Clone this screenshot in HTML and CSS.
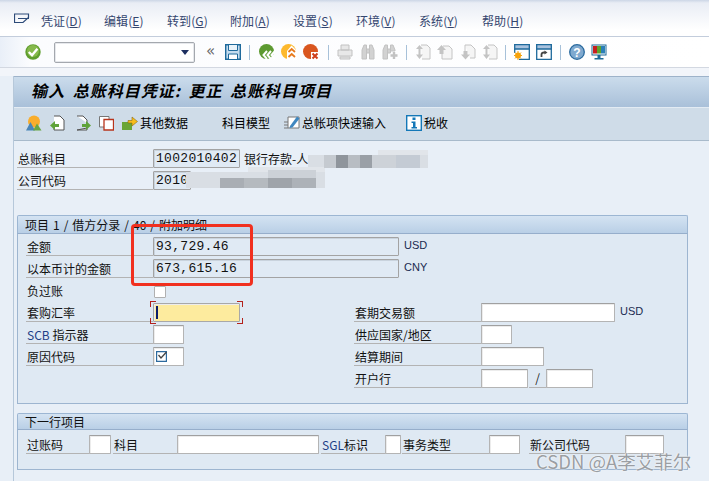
FILE: index.html
```html
<!DOCTYPE html>
<html lang="zh">
<head>
<meta charset="utf-8">
<title>输入 总账科目凭证</title>
<link rel="stylesheet" href="styles.css">
</head>
<body>
<div class="page">
  <header class="menubar">
    <svg class="menuicon" width="16" height="12" viewBox="0 0 16 12"><path d="M.5 1H14.500V4.500L9 9.500H.5Z M4 5.500H15" fill="none" stroke="#2c4a78" stroke-width="1.200"/></svg>
    <nav class="menus">
      <span class="menu">凭证(<u>D</u>)</span>
      <span class="menu">编辑(<u>E</u>)</span>
      <span class="menu">转到(<u>G</u>)</span>
      <span class="menu">附加(<u>A</u>)</span>
      <span class="menu">设置(<u>S</u>)</span>
      <span class="menu">环境(<u>V</u>)</span>
      <span class="menu">系统(<u>Y</u>)</span>
      <span class="menu">帮助(<u>H</u>)</span>
    </nav>
  </header>

  <div class="toolbar">
    <svg class="ic ok" viewBox="0 0 16 16"><circle cx="8" cy="8" r="7.700" fill="#5f9e2e"/><circle cx="8" cy="7" r="6" fill="#86b94c"/><path d="M3.800 8 7 11.200 12.400 4.800" fill="none" stroke="#fff" stroke-width="2.400"/></svg>
    <div class="cmd"><span class="caret"></span></div>
    <span class="chev">«</span>
    <svg class="ic" viewBox="0 0 16 16"><path d="M.7.7H15.300V15.300H.7Z" fill="#c5dcee" stroke="#1f6a9c" stroke-width="1.400"/><path d="M3.500 1V6.500H12.500V1" fill="#e9f3fa" stroke="#1f6a9c"/><path d="M3.500 15V10H12.500V15" fill="#fff" stroke="#1f6a9c"/></svg>
    <i class="sep s1"></i>
    <svg class="ic" viewBox="0 0 16 16"><circle cx="7.500" cy="7.500" r="7.500" fill="#5d9a31"/><path d="M8 7 4.500 11 8 15M12 7 8.500 11 12 15M16 7 12.500 11 16 15" fill="none" stroke="#fff" stroke-width="2"/></svg>
    <svg class="ic g6" viewBox="0 0 16 16"><circle cx="7.500" cy="7.500" r="7.500" fill="#fdb92e"/><path d="M10.500 1.500 16 7V16H6V7Z" fill="#fff"/><path d="M7.500 8 10.700 5 14 8M7.500 13 10.700 10 14 13" fill="none" stroke="#e87a1c" stroke-width="1.800"/></svg>
    <svg class="ic g6" viewBox="0 0 16 16"><circle cx="7.500" cy="7.500" r="7.500" fill="#d9561f"/><rect x="8" y="8" width="8" height="8" fill="#fff"/><path d="M9.500 9.500 14.500 14.500M14.500 9.500 9.500 14.500" stroke="#cf3e1a" stroke-width="2"/></svg>
    <i class="sep s2"></i>
    <svg class="ic" viewBox="0 0 16 16"><path d="M4 1H12V6H4ZM1 6H15V12H1ZM3 13H13V15H3Z" fill="#e8e8e8" stroke="#c2c2c2"/></svg>
    <svg class="ic g7 dim" viewBox="0 0 16 16"><path d="M2 15V6L4 1H6.500V15ZM9.500 15V1H12L14 6V15ZM6.500 5H9.500V9H6.500Z" fill="#d2d2d2" stroke="#c2c2c2"/></svg>
    <svg class="ic g6 dim" viewBox="0 0 16 16"><path d="M1 15V6L3 1H5.500V15ZM8.500 9V1H11L13 6V7H8.500ZM5.500 5H8.500V9H5.500Z" fill="#d2d2d2" stroke="#c2c2c2"/><path d="M12 8V15M8.500 11.500H15.500" stroke="#c2c2c2" stroke-width="2.400"/></svg>
    <i class="sep s3"></i>
    <svg class="ic" viewBox="0 0 16 16"><path d="M6 1H12L15 4V15H7" fill="#f5f5f5" stroke="#c4c4c4"/><path d="M4.500 1 8 5H1ZM4.500 15 1 10.500H8Z M3.500 4H5.500V12H3.500Z" fill="#c4c4c4"/></svg>
    <svg class="ic g6" viewBox="0 0 16 16"><path d="M6 2H12L15 5V15H5V9" fill="#f5f5f5" stroke="#c4c4c4"/><path d="M4.500 1 9 6H6.500V10H2.500V6H0Z" fill="#c4c4c4"/></svg>
    <svg class="ic g8 nar" viewBox="0 0 15 16"><path d="M4 1H10L14 5V14H9M4 1V7" fill="#f5f5f5" stroke="#c4c4c4"/><path d="M4.500 15.500 0 10.500H2.500V7H6.500V10.500H9Z" fill="#c4c4c4"/></svg>
    <svg class="ic g6" viewBox="0 0 16 16"><path d="M6 1H12L15 4V15H7" fill="#f5f5f5" stroke="#c4c4c4"/><path d="M4.500 1 8 5H1ZM4.500 15 1 10.500H8Z M3.500 4H5.500V12H3.500Z" fill="#c4c4c4"/></svg>
    <i class="sep s5"></i>
    <svg class="ic" viewBox="0 0 16 16"><path d="M.7.7H15.300V15.300H5" fill="#fff" stroke="#1f6a9c" stroke-width="1.300"/><path d="M.7.7H15.300V5H.7Z" fill="#a9c2de" stroke="#1f6a9c" stroke-width="1.300"/><path d="M.7 5V9" stroke="#1f6a9c" stroke-width="1.300"/><circle cx="4" cy="11.500" r="3" fill="#f7a30a"/><path d="M4 7V16M0 11.500H8M1 8.500 7 14.500M7 8.500 1 14.500" stroke="#f7a30a"/></svg>
    <svg class="ic g6" viewBox="0 0 16 16"><path d="M.7.7H15.300V15.300H.7Z" fill="#fff" stroke="#1f6a9c" stroke-width="1.300"/><path d="M.7.7H15.300V5H.7Z" fill="#a9c2de" stroke="#1f6a9c" stroke-width="1.300"/><path d="M5.500 13V10.500Q5.500 8.500 8 8.500H9" fill="none" stroke="#444" stroke-width="1.800"/><path d="M8.500 6.500 11.500 8.500 8.500 10.500Z" fill="#444"/></svg>
    <i class="sep s4"></i>
    <svg class="ic" viewBox="0 0 16 16"><circle cx="8" cy="8" r="7.300" fill="#7fa9cf" stroke="#2a6a9e" stroke-width="1.300"/><text class="qm" x="8" y="12.500" text-anchor="middle">?</text></svg>
    <svg class="ic g6" viewBox="0 0 16 16"><path d="M.5.5H15.500V11.500H.5ZM6.500 11.500H9.500V14H6.500ZM3.500 14H12.500V15.500H3.500Z" fill="#1c6a98"/><rect x="1.500" y="1.500" width="13" height="9" fill="#fff"/><rect x="2" y="2" width="4" height="7.500" fill="#c71f1f"/><rect x="6" y="2" width="4" height="7.500" fill="#5fa32c"/><rect x="10" y="2" width="4" height="7.500" fill="#2a7fb8"/></svg>
  </div>
  <div class="gap"></div>

  <main class="screen">
    <h1 class="title">输入 总账科目凭证: 更正 总账科目项目</h1>
    <div class="apptools">
      <svg class="ic" viewBox="0 0 16 16"><circle cx="8" cy="6.500" r="6" fill="#f9ad2c"/><path d="M0 15.500 4.500 7 9 15.500Z" fill="#4a86b8"/><path d="M7 15.500 11 8.500 15.500 15.500Z" fill="#6ba642"/></svg>
      <svg class="ic a8 nar" viewBox="0 0 15 16"><path d="M4 1H10L14 5V15H4V12" fill="#fff" stroke="#555"/><path d="M0 10.500 5 6V9H9V12H5V15Z" fill="#5fa33a"/></svg>
      <svg class="ic a12 nar" viewBox="0 0 15 16"><path d="M1 1H7L11 5V8M11 13V15H1Z" fill="#fff" stroke="#555"/><path d="M15 10.500 10 6V9H6V12H10V15Z" fill="#5fa33a"/></svg>
      <svg class="ic a9 nar" viewBox="0 0 15 16"><path d="M.5 1.500H10V12H.5Z" fill="#fff" stroke="#777"/><path d="M5 4.500H14.500V15H5Z" fill="#fff" stroke="#b8341c" stroke-width="1.300"/></svg>
      <button class="tbtn a10"><svg class="ic" viewBox="0 0 16 16"><rect x="0" y="7" width="10" height="8" fill="#6aa535"/><path d="M6 5.500H10V2L15.500 6.500 10 11V8H6Z" fill="#f8bd1c" stroke="#8a6a10" stroke-width=".6"/></svg><span>其他数据</span></button>
      <button class="tbtn a34"><span>科目模型</span></button>
      <button class="tbtn a14"><svg class="ic" viewBox="0 0 16 16"><path d="M4 2H15V13H4Z" fill="#fff" stroke="#777"/><path d="M6 11 13 1.500 15.500 3.500 8.500 12.500 5.500 13Z" fill="#3f87c0"/><path d="M0 7H4M0 10H4M0 13H4" stroke="#777"/></svg><span>总帐项快速输入</span></button>
      <button class="tbtn a21"><svg class="ic" viewBox="0 0 16 16"><rect x=".7" y=".7" width="14.600" height="14.600" fill="#fff" stroke="#1478b8" stroke-width="1.400"/><rect x="6.500" y="2.500" width="3" height="2.500" fill="#1478b8"/><path d="M5.500 6.500H9.500V12H11V13.500H5.500V12H7V8H5.500Z" fill="#1478b8"/></svg><span>税收</span></button>
    </div>

    <section class="content">
      <div class="head">
        <div class="row">
          <span class="lbl lbl-head">总账科目</span>
          <span class="fld ro mono w-acct">1002010402</span>
          <span class="desc">银行存款-人</span>
        </div>
        <div class="row">
          <span class="lbl lbl-head">公司代码</span>
          <span class="fld ro mono w-co">2010</span>
        </div>
      </div>

      <section class="group g1">
        <h2 class="ghead gh1">项目 1 / 借方分录 / 40 / 附加明细</h2>
        <div class="gbody">
          <div class="row">
            <span class="lbl lbl-main">金额</span>
            <span class="fld ro mono w-amt">93,729.46</span>
            <span class="unit">USD</span>
          </div>
          <div class="row">
            <span class="lbl lbl-main">以本币计的金额</span>
            <span class="fld ro mono w-amt">673,615.16</span>
            <span class="unit">CNY</span>
          </div>
          <div class="row">
            <span class="lbl lbl-plain">负过账</span>
            <span class="chk"></span>
          </div>
          <div class="cols">
            <div class="col col-l">
              <div class="row">
                <span class="lbl lbl-main">套购汇率</span>
                <span class="fld focus w-rate"><i class="cursor"></i><i class="cn tl"></i><i class="cn tr"></i><i class="cn bl"></i><i class="cn br"></i></span>
              </div>
              <div class="row">
                <span class="lbl lbl-main"><em class="blue">SCB</em> 指示器</span>
                <span class="fld w-30"></span>
              </div>
              <div class="row">
                <span class="lbl lbl-main">原因代码</span>
                <span class="fld w-30 has-check"><svg width="11" height="11" viewBox="0 0 11 11"><path d="M.6.6H10.400V10.400H.6Z" fill="none" stroke="#2c6a9e" stroke-width="1.200"/><path d="M2.500 4 5 7 10.500 1" fill="none" stroke="#444" stroke-width="1.300"/></svg></span>
              </div>
            </div>
            <div class="col">
              <div class="row">
                <span class="lbl lbl-right">套期交易额</span>
                <span class="fld w-134"></span>
                <span class="unit">USD</span>
              </div>
              <div class="row">
                <span class="lbl lbl-right">供应国家/地区</span>
                <span class="fld w-30"></span>
              </div>
              <div class="row">
                <span class="lbl lbl-right">结算期间</span>
                <span class="fld w-62"></span>
              </div>
              <div class="row">
                <span class="lbl lbl-right">开户行</span>
                <span class="fld w-46"></span>
                <span class="slash">/</span>
                <span class="fld w-46"></span>
              </div>
            </div>
          </div>
        </div>
      </section>

      <section class="group g2">
        <h2 class="ghead gh2">下一行项目</h2>
        <div class="gbody gb2">
          <div class="row">
            <span class="lbl l-a">过账码</span><span class="fld w-22"></span>
            <span class="lbl l-b">科目</span><span class="fld w-142"></span>
            <span class="lbl l-c"><em class="blue">SGL</em>标识</span><span class="fld w-16"></span>
            <span class="lbl l-d">事务类型</span><span class="fld w-32"></span>
            <span class="lbl l-e">新公司代码</span><span class="fld w-38"></span>
          </div>
        </div>
      </section>
    </section>
  </main>

  <svg class="mosaic" width="250" height="48" viewBox="0 0 250 48">
    <g fill="#d9dee4"><rect x="124" y="8" width="120" height="13"/><rect x="2" y="25" width="139" height="16"/></g>
    <g fill="#e1e5ea"><rect x="194" y="3" width="50" height="5"/><rect x="64" y="20" width="77" height="5"/></g>
    <rect x="152" y="8" width="12" height="13" fill="#8f959c"/>
    <rect x="176" y="8" width="12" height="13" fill="#9aa0a7"/>
    <rect x="140" y="8" width="12" height="13" fill="#c5cad0"/>
    <rect x="164" y="8" width="12" height="13" fill="#b8bdc3"/>
    <rect x="188" y="8" width="24" height="13" fill="#cdd2d8"/>
    <rect x="212" y="8" width="24" height="13" fill="#c4cbd4"/>
    <rect x="36" y="31" width="24" height="10" fill="#a9aeb4"/>
    <rect x="60" y="31" width="24" height="10" fill="#b5babf"/>
    <rect x="84" y="31" width="24" height="10" fill="#9fa4aa"/>
    <rect x="108" y="31" width="24" height="10" fill="#adb2b8"/>
    <rect x="84" y="23" width="48" height="8" fill="#ccd1d7"/>
  </svg>
  <div class="redbox"></div>
  <div class="mark">CSDN @A李艾菲尔</div>
</div>
</body>
</html>
```

FILE: styles.css
```css
* { box-sizing: border-box; }
html, body { margin: 0; padding: 0; }
body {
  font-family: "Noto Sans CJK SC", "Liberation Sans", sans-serif;
  font-size: 12px;
  color: #111;
  background: #e8eff7;
}
.page { position: relative; width: 709px; height: 481px; overflow: hidden; }
.menubar {
  height: 37px;
  display: flex;
  align-items: center;
  padding: 2px 0 0 14px;
  border-bottom: 1px solid #c3cddc;
  background: linear-gradient(#ccd6e6 0, #e9edf5 3px, #fff 30px);
}
.menuicon { margin-right: 11px; margin-top: -1px; }
.menus { display: flex; margin-top: 3px; }
.menu { width: 63px; color: #34466f; font-size: 12px; line-height: 16px; letter-spacing: .1px; }
.toolbar {
  height: 31px;
  display: flex;
  align-items: center;
  padding-left: 25px;
  border-bottom: 1px solid #d3d8e1;
  background: linear-gradient(90deg, #e9eff8, #fbfcfe 30px, #fff);
}
.ic { width: 16px; height: 16px; flex: none; display: block; }
.nar { width: 15px; }
.cmd {
  width: 141px; height: 21px; margin-left: 13px; position: relative;
  border: 1px solid #a4a8ae; border-radius: 2px; background: #fff;
  box-shadow: inset 0 0 0 1px #e6e8ec;
}
.caret {
  position: absolute; right: 5px; top: 7px; width: 0; height: 0;
  border-left: 4px solid transparent; border-right: 4px solid transparent;
  border-top: 5px solid #1d2f60;
}
.chev { width: 9px; margin: -3px 10px 0 11px; color: #666; font: 15px/16px "DejaVu Sans", sans-serif; }
.sep { width: 1px; height: 15px; background: #a7c1d9; flex: none; }
.s1 { margin: 0 9px 0 8px; }
.s2 { margin: 0 8px 0 9px; }
.s3 { margin: 0 8px 0 8px; }
.s4 { margin: 0 8px 0 8px; }
.s5 { margin: 0 8px 0 7px; }
.g6 { margin-left: 6px; }
.g7 { margin-left: 7px; }
.g8 { margin-left: 8px; }
.qm { fill: #fff; font: bold 12px "Liberation Sans", sans-serif; }
.gap { height: 8px; background: #f2f5fa; }
.screen { margin-left: 13px; border-left: 1px solid #b6c8da; height: 405px; }
.title {
  height: 31px; margin: 0; padding-left: 17px;
  font-size: 16px; font-weight: bold; font-style: italic; line-height: 27px; color: #000;
  letter-spacing: 1px; word-spacing: 3px; white-space: pre;
  border-top: 1px solid #9eb3ca;
  background: linear-gradient(#cbdcec, #a9c0d9);
}
.apptools {
  height: 34px; display: flex; align-items: center; padding: 0 0 3px 12px;
  background: #cfdce8;
  border-top: 1px solid #e3ebf3;
  border-bottom: 1px solid #a8bacb;
}
.tbtn {
  display: flex; align-items: center; gap: 2px; padding: 0; border: 0; background: none;
  font: inherit; font-size: 12px; color: #000;
}
.a8 { margin-left: 8px; }
.a12 { margin-left: 11px; }
.a9 { margin-left: 8px; }
.a10 { margin-left: 8px; }
.a34 { margin-left: 34px; }
.a14 { margin-left: 14px; }
.a21 { margin-left: 20px; }
.content { padding-top: 8px; }
.head { padding-left: 3px; }
.row { display: flex; align-items: stretch; height: 19px; margin-bottom: 3px; }
.lbl {
  flex: none; display: block; line-height: 18px; padding: 1px 0 0 1px;
  border-bottom: 1px solid #b3b3b3; white-space: nowrap;
}
.lbl-head { width: 136px; }
.lbl-main { width: 127px; }
.lbl-right { width: 127px; }
.lbl-plain { width: 127px; border-bottom: 0; }
.blue { font-style: normal; color: #1f3f86; }
.fld {
  flex: none; display: block; position: relative; height: 19px; background: #fff;
  border: 1px solid #b4b4b4; border-top-color: #a0a0a0; border-radius: 1px;
  box-shadow: inset 1px 1px 0 #ececec;
}
.ro { background: #e0eaf4; border-color: #a3a3a3; box-shadow: inset 1px 1px 0 #c9d3dd; }
.mono {
  font: 13px/18px "Liberation Mono", monospace; letter-spacing: .3px;
  padding-left: 2px; color: #111;
}
.w-acct { width: 87px; }
.w-co { width: 38px; }
.desc { margin-left: 4px; line-height: 19px; }
.group { margin-left: 3px; width: 671px; }
.g1 { margin-top: 25px; }
.g2 { margin-top: 9px; }
.ghead {
  margin: 0; height: 19px; padding-left: 7px;
  font-size: 12px; font-weight: normal; line-height: 18px;
  border: 1px solid #9cb6d3; border-bottom: 1px solid #96aecb; border-radius: 2px 2px 0 0;
  background: linear-gradient(#d4e3f2, #b9cfe6);
}
.gh1 { word-spacing: 1.300px; }
.gh2 { height: 17px; line-height: 16px; }
.gbody {
  padding: 3px 0 12px 8px; background: #dfe9f3;
  border: 1px solid #9db5d0; border-top: 0;
}
.gb2 { padding: 5px 0 12px 8px; }
.unit { margin-left: 5px; font: 11px/17px "Liberation Sans", sans-serif; color: #1a2b50; }
.w-amt { width: 246px; }
.chk {
  margin: 5px 0 0 1px; width: 12px; height: 12px; background: #fff;
  border: 1px solid #b0b0b0; border-radius: 1px;
}
.cols { display: flex; }
.col-l { width: 328px; }
.focus { background: #fdeb9e; border-color: #a8a8a8; }
.w-rate { width: 87px; }
.cursor { position: absolute; left: 2px; top: 2px; width: 2px; height: 13px; background: #0b1d6a; }
.cn { position: absolute; width: 6px; height: 6px; border: 0 solid #b3211b; }
.tl { left: -4px; top: -3px; border-width: 1px 0 0 1px; }
.tr { right: -4px; top: -3px; border-width: 1px 1px 0 0; }
.bl { left: -4px; bottom: -3px; border-width: 0 0 1px 1px; }
.br { right: -4px; bottom: -3px; border-width: 0 1px 1px 0; }
.w-30 { width: 31px; }
.has-check { padding: 3px 0 0 2px; }
.has-check svg { display: block; }
.w-134 { width: 134px; }
.w-62 { width: 63px; }
.w-46 { width: 47px; }
.w-22 { width: 22px; }
.w-142 { width: 142px; }
.w-16 { width: 16px; }
.w-32 { width: 31px; }
.w-38 { width: 39px; }
.slash { width: 17px; text-align: center; line-height: 18px; color: #222; border-bottom: 1px solid #b3b3b3; margin: 0 0 0 1px; }
.l-a { width: 63px; }
.l-b { width: 64px; margin-left: 2px; }
.l-c { width: 64px; margin-left: 2px; }
.l-d { width: 87px; margin-left: 1px; }
.l-e { width: 96px; margin-left: 9px; }
.mosaic { position: absolute; left: 184px; top: 147px; }
.redbox {
  position: absolute; left: 131px; top: 224px; width: 122px; height: 62px;
  border: 3px solid #f1301f; border-radius: 4px;
}
.mark {
  position: absolute; left: 536px; top: 449px;
  font-size: 18.500px; line-height: 24px; color: #9a9ea3; white-space: nowrap;
  text-shadow: 0 0 2px #fff, 0 0 1px #fff;
}
```
